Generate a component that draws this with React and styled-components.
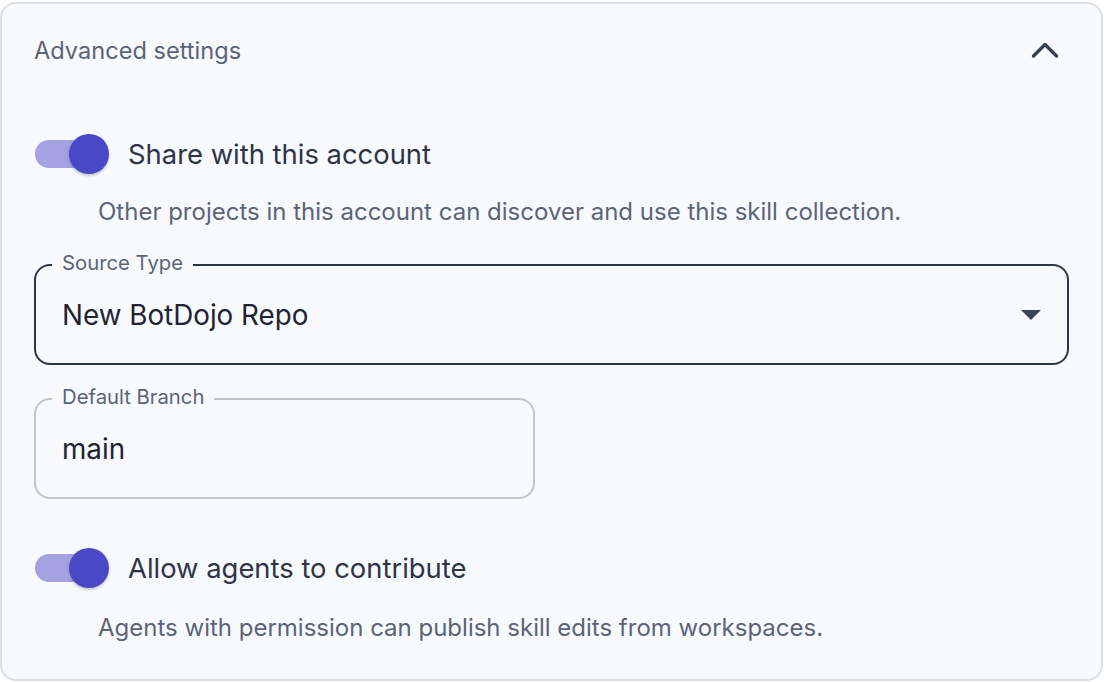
import React, { useState } from 'react';
import styled, { createGlobalStyle } from 'styled-components';

const GlobalStyle = createGlobalStyle`
  html, body {
    margin: 0;
    padding: 0;
    background: #ffffff;
  }
  body {
    font-family: Inter, "Noto Sans", "Liberation Sans", sans-serif;
    -webkit-font-smoothing: antialiased;
  }
`;

const Card = styled.section`
  box-sizing: border-box;
  margin: 2px 1px 1px 0;
  height: 679px;
  border: 2px solid #dcdee6;
  border-radius: 16px;
  background: #f8f9fd;
  display: flex;
  flex-direction: column;
`;

const Header = styled.div`
  height: 92px;
  padding: 0 32px 0 32px;
  display: flex;
  align-items: center;
  justify-content: space-between;
`;

const Title = styled.span`
  font-size: 23.6px;
  color: #5b6477;
`;

const Collapse = styled.button`
  width: 48px;
  height: 48px;
  border: 0;
  background: transparent;
  padding: 0;
  display: flex;
  align-items: center;
  justify-content: center;
  cursor: pointer;
  color: #374151;
`;

const Body = styled.div`
  padding: 0 32px;
  display: flex;
  flex-direction: column;
`;

const SwitchRow = styled.label`
  display: flex;
  align-items: center;
  height: 76px;
  margin-top: ${p => p.$top}px;
  cursor: pointer;
`;

const Track = styled.span`
  position: relative;
  flex: none;
  width: 68px;
  height: 28px;
  margin-left: 1px;
  border-radius: 14px;
  background: ${p => (p.$on ? '#a4a2e2' : '#c9cbd3')};
`;

const Thumb = styled.span`
  position: absolute;
  top: -6px;
  left: ${p => (p.$on ? 34 : -6)}px;
  width: 40px;
  height: 40px;
  border-radius: 50%;
  background: ${p => (p.$on ? '#4b48c7' : '#ffffff')};
  box-shadow: 0 2px 2px rgba(0, 0, 0, 0.14), 0 1px 5px rgba(0, 0, 0, 0.08);
`;

const SwitchLabel = styled.span`
  margin-left: 25px;
  font-size: 27.4px;
  color: #2e3446;
`;

const Hint = styled.p`
  margin: ${p => p.$top}px 0 0 64px;
  font-size: 24px;
  line-height: 30px;
  color: #5b6478;
`;

const Field = styled.div`
  position: relative;
  box-sizing: border-box;
  width: ${p => p.$width};
  height: 101px;
  margin-top: ${p => p.$top}px;
  border: 2px solid ${p => (p.$strong ? '#2f3646' : '#c4c5c9')};
  border-radius: 16px;
  display: flex;
  align-items: center;
  padding: 0 25px 0 26px;
`;

/* legend sits on the border line, covering it with the card background */
const Legend = styled.span`
  position: absolute;
  top: -15px;
  left: 16px;
  padding: 0 10px;
  background: #f8f9fd;
  font-size: 20.3px;
  line-height: 24px;
  color: #5b6477;
`;

const Value = styled.span`
  flex: 1;
  font-size: 27.8px;
  color: #1f2433;
`;

const Toggle = ({ label, top, initial = true }) => {
  const [on, setOn] = useState(initial);
  return (
    <SwitchRow $top={top} onClick={() => setOn(!on)}>
      <Track $on={on}>
        <Thumb $on={on} />
      </Track>
      <SwitchLabel>{label}</SwitchLabel>
    </SwitchRow>
  );
};

export default function App() {
  return (
    <>
      <GlobalStyle />
      <Card>
        <Header>
          <Title>Advanced settings</Title>
          <Collapse aria-label="Collapse">
            <svg width="28" height="28" viewBox="0 0 28 28" fill="none">
              <path d="M2.5 20 L14 8.5 L25.5 20" stroke="currentColor" strokeWidth="3.4" strokeLinecap="round" strokeLinejoin="round" />
            </svg>
          </Collapse>
        </Header>
        <Body>
          <Toggle label="Share with this account" top={20} />
          <Hint $top={5}>Other projects in this account can discover and use this skill collection.</Hint>
          <Field $width="1035px" $top={37} $strong>
            <Legend>Source Type</Legend>
            <Value>New BotDojo Repo</Value>
            <svg width="22" height="12" viewBox="0 0 22 12">
              <path d="M1 1 L21 1 L11 11 Z" fill="#3b4456" />
            </svg>
          </Field>
          <Field $width="501px" $top={33}>
            <Legend>Default Branch</Legend>
            <Value>main</Value>
          </Field>
          <Toggle label="Allow agents to contribute" top={31} />
          <Hint $top={7}>Agents with permission can publish skill edits from workspaces.</Hint>
        </Body>
      </Card>
    </>
  );
}
